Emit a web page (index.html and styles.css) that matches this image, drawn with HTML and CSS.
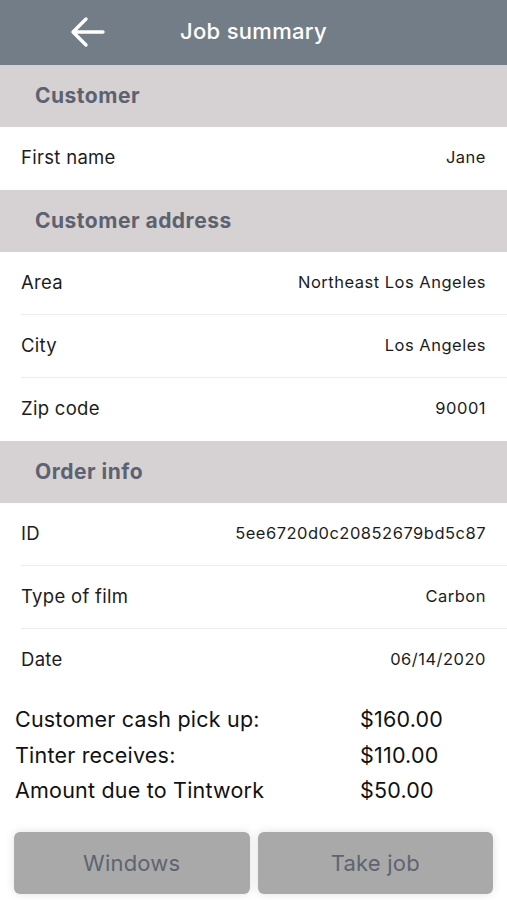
FILE: index.html
```html
<!DOCTYPE html>
<html>
<head>
<meta charset="utf-8">
<link rel="stylesheet" href="styles.css">
</head>
<body>
<div class="app">
  <header class="topbar">
    <svg class="back" width="36" height="32" viewBox="0 0 36 32"><path d="M34 16H4M17 3L4 16l13 13" fill="none" stroke="#fff" stroke-width="3.4" stroke-linecap="round" stroke-linejoin="round"/></svg>
    <h1 class="title">Job summary</h1>
  </header>

  <div class="section">Customer</div>
  <div class="row last"><span class="label">First name</span><span class="value">Jane</span></div>

  <div class="section">Customer address</div>
  <div class="row"><span class="label">Area</span><span class="value">Northeast Los Angeles</span></div>
  <div class="row"><span class="label">City</span><span class="value">Los Angeles</span></div>
  <div class="row last"><span class="label">Zip code</span><span class="value">90001</span></div>

  <div class="section">Order info</div>
  <div class="row"><span class="label">ID</span><span class="value">5ee6720d0c20852679bd5c87</span></div>
  <div class="row"><span class="label">Type of film</span><span class="value">Carbon</span></div>
  <div class="row last"><span class="label">Date</span><span class="value">06/14/2020</span></div>

  <div class="totals">
    <span class="tl">Customer cash pick up:</span><span class="tv">$160.00</span>
    <span class="tl">Tinter receives:</span><span class="tv">$110.00</span>
    <span class="tl">Amount due to Tintwork</span><span class="tv">$50.00</span>
  </div>

  <div class="actions">
    <button class="btn">Windows</button>
    <button class="btn">Take job</button>
  </div>
</div>
</body>
</html>
```

FILE: styles.css
```css
* { box-sizing: border-box; }
html, body { margin: 0; padding: 0; background: #fff; }
body { font-family: Inter, Roboto, sans-serif; color: #1c1c1e; }
.app { width: 507px; height: 900px; overflow: hidden; display: flex; flex-direction: column; }
.topbar { flex: none; height: 65px; background: #737d88; display: flex; align-items: center; position: relative; }
.back { margin-left: 69px; margin-top: -2px; }
.title { position: absolute; left: 0; right: 0; text-align: center; margin: 0; margin-top: -4px; font-size: 22px; letter-spacing: 0.3px; font-weight: 500; color: #fff; pointer-events: none; }
.section { flex: none; height: 62px; background: #d6d1d3; display: flex; align-items: center; padding-left: 35px; padding-bottom: 2px; font-size: 21px; letter-spacing: 0.5px; font-weight: 700; color: #5c6270; }
.row { flex: none; height: 63px; display: flex; align-items: center; justify-content: space-between; margin-left: 21px; padding-right: 21px; padding-bottom: 3px; border-bottom: 1px solid #ececec; }
.row.last { border-bottom: none; }
.label { font-size: 18.5px; letter-spacing: 0.3px; color: #1c1c1e; }
.value { font-size: 16.5px; letter-spacing: 0.5px; color: #1c1c1e; }
.totals { display: grid; grid-template-columns: 345px auto; row-gap: 5.5px; padding: 12px 0 0 15px; font-size: 21.5px; letter-spacing: 0.2px; line-height: 30px; color: #111; }
.actions { display: flex; gap: 8px; padding: 0 14px; margin-top: 27px; }
.btn { flex: 1; height: 62px; border: none; border-radius: 6px; background: #a9a9a9; color: #5e6470; font-family: Inter, sans-serif; font-size: 22px; letter-spacing: 0.2px; box-shadow: 0 0 10px rgba(0,0,0,0.12); }
```
